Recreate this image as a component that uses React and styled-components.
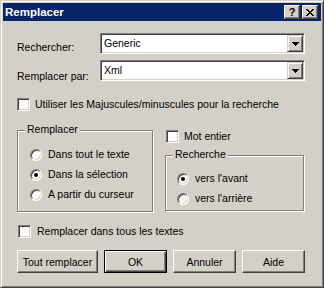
import React from 'react'
import styled, { createGlobalStyle } from 'styled-components'

const GlobalStyle = createGlobalStyle`
  html, body {
    margin: 0;
    padding: 0;
    background: #d4d0c8;
  }
  body {
    font-family: "Liberation Sans", Arial, sans-serif;
    font-size: 10.5px;
    color: #000;
  }
`

const Window = styled.div`
  width: 324px;
  height: 288px;
  box-sizing: border-box;
  background: #d4d0c8;
  border: 1px solid;
  border-color: #d4d0c8 #404040 #404040 #d4d0c8;
  box-shadow: inset 1px 1px #fff, inset -1px -1px #808080;
  padding: 2px;
  display: flex;
  flex-direction: column;
`

const TitleBar = styled.div`
  height: 18px;
  flex-shrink: 0;
  background: #0a246a;
  display: flex;
  align-items: center;
  padding: 0 3px 0 2px;
`

const Title = styled.span`
  flex: 1;
  color: #fff;
  font-weight: bold;
  font-size: 11.5px;
  line-height: 18px;
`

const CaptionButton = styled.div`
  width: 16px;
  height: 14px;
  box-sizing: border-box;
  background: #d4d0c8;
  border: 1px solid;
  border-color: #fff #404040 #404040 #fff;
  box-shadow: inset -1px -1px #808080;
  display: flex;
  align-items: center;
  justify-content: center;
  font-weight: bold;
  font-size: 11px;
  line-height: 12px;
  & + & {
    margin-left: 2px;
  }
`

const Body = styled.div`
  flex: 1;
  display: flex;
  flex-direction: column;
  padding: 12px 16px 0 14px;
`

const FieldRow = styled.div`
  display: flex;
  height: 21px;
  margin-top: ${p => p.$top || 0}px;
`

const FieldLabel = styled.div`
  width: 83px;
  padding-top: ${p => p.$offset}px;
  line-height: 13px;
  white-space: nowrap;
`

const Combo = styled.div`
  width: 205px;
  height: 21px;
  box-sizing: border-box;
  background: #fff;
  border: 1px solid;
  border-color: #808080 #fff #fff #808080;
  box-shadow: inset 1px 1px #404040, inset -1px -1px #d4d0c8;
  padding: 1px;
  display: flex;
`

const ComboText = styled.div`
  flex: 1;
  padding-left: 2px;
  line-height: 17px;
  white-space: nowrap;
`

const DropButton = styled.div`
  width: 16px;
  height: 17px;
  box-sizing: border-box;
  background: #d4d0c8;
  border: 1px solid;
  border-color: #d4d0c8 #404040 #404040 #d4d0c8;
  box-shadow: inset 1px 1px #fff, inset -1px -1px #808080;
  display: flex;
  align-items: center;
  justify-content: center;
`

const CheckRow = styled.div`
  display: flex;
  align-items: center;
  height: 13px;
  margin-top: ${p => p.$top || 0}px;
  margin-left: ${p => p.$indent || 0}px;
`

const CheckBox = styled.div`
  width: 13px;
  height: 13px;
  box-sizing: border-box;
  flex-shrink: 0;
  background: #fff;
  border: 1px solid;
  border-color: #808080 #fff #fff #808080;
  box-shadow: inset 1px 1px #404040, inset -1px -1px #d4d0c8;
`

const OptionLabel = styled.span`
  margin-left: ${p => p.$gap || 5}px;
  line-height: 13px;
  white-space: nowrap;
`

const Options = styled.div`
  display: flex;
  margin-top: 19px;
  height: 82px;
`

const RightColumn = styled.div`
  display: flex;
  flex-direction: column;
  margin-left: 12px;
  flex: 1;
`

const Group = styled.div`
  position: relative;
  box-sizing: border-box;
  width: ${p => p.$w}px;
  height: ${p => p.$h}px;
  margin-top: ${p => p.$top || 0}px;
  border: 1px solid #808080;
  box-shadow: inset 1px 1px #fff, 1px 1px #fff;
  padding: ${p => p.$padTop}px 0 0 ${p => p.$padLeft}px;
  display: flex;
  flex-direction: column;
  gap: 7px;
`

const Legend = styled.span`
  position: absolute;
  top: -8px;
  left: 7px;
  padding: 0 2px;
  background: #d4d0c8;
  line-height: 13px;
`

const RadioRow = styled.div`
  display: flex;
  align-items: center;
  height: 13px;
`

const Radio = styled.div`
  position: relative;
  width: 12px;
  height: 12px;
  box-sizing: border-box;
  flex-shrink: 0;
  border-radius: 50%;
  background: #fff;
  border: 1px solid;
  border-color: #808080 #fff #fff #808080;
  box-shadow: inset 1px 1px #404040, inset -1px -1px #d4d0c8;
  &::after {
    content: '';
    display: ${p => (p.$checked ? 'block' : 'none')};
    position: absolute;
    left: 3px;
    top: 3px;
    width: 4px;
    height: 4px;
    border-radius: 50%;
    background: #000;
  }
`

const ButtonRow = styled.div`
  display: flex;
  gap: 6px;
  margin-top: 12px;
`

const Button = styled.button`
  width: ${p => p.$w}px;
  height: 23px;
  box-sizing: border-box;
  padding: 0;
  font: inherit;
  color: #000;
  background: #d4d0c8;
  border: 1px solid;
  border-color: ${p => (p.$default ? '#000' : '#fff #404040 #404040 #fff')};
  box-shadow: ${p =>
    p.$default
      ? 'inset 1px 1px #fff, inset -1px -1px #404040, inset -2px -2px #808080'
      : 'inset -1px -1px #808080'};
  white-space: nowrap;
`

function CloseGlyph() {
  return (
    <svg width="8" height="7" viewBox="0 0 8 7" shapeRendering="crispEdges">
      <path
        fill="#000"
        d="M0 0h2v1h-2zM6 0h2v1h-2zM1 1h2v1h-2zM5 1h2v1h-2zM2 2h4v1h-4zM3 3h2v1h-2zM2 4h4v1h-4zM1 5h2v1h-2zM5 5h2v1h-2zM0 6h2v1h-2zM6 6h2v1h-2z"
      />
    </svg>
  )
}

function DownArrow() {
  return (
    <svg width="7" height="4" viewBox="0 0 7 4" shapeRendering="crispEdges">
      <path fill="#000" d="M0 0h7v1h-1v1h-1v1h-1v1h-1v-1h-1v-1h-1v-1h-1z" />
    </svg>
  )
}

function ComboBox({ value }) {
  return (
    <Combo>
      <ComboText>{value}</ComboText>
      <DropButton>
        <DownArrow />
      </DropButton>
    </Combo>
  )
}

function Check({ label, top, indent, gap }) {
  return (
    <CheckRow $top={top} $indent={indent}>
      <CheckBox />
      <OptionLabel $gap={gap}>{label}</OptionLabel>
    </CheckRow>
  )
}

function RadioOption({ label, checked }) {
  return (
    <RadioRow>
      <Radio $checked={checked} />
      <OptionLabel $gap={6}>{label}</OptionLabel>
    </RadioRow>
  )
}

export default function App() {
  return (
    <>
      <GlobalStyle />
      <Window>
        <TitleBar>
          <Title>Remplacer</Title>
          <CaptionButton>?</CaptionButton>
          <CaptionButton>
            <CloseGlyph />
          </CaptionButton>
        </TitleBar>
        <Body>
          <FieldRow>
            <FieldLabel $offset={8}>Rechercher:</FieldLabel>
            <ComboBox value="Generic" />
          </FieldRow>
          <FieldRow $top={6}>
            <FieldLabel $offset={10}>Remplacer par:</FieldLabel>
            <ComboBox value="Xml" />
          </FieldRow>
          <Check top={17} label="Utiliser les Majuscules/minuscules pour la recherche" />
          <Options>
            <Group $w={136} $h={82} $padTop={17} $padLeft={12}>
              <Legend>Remplacer</Legend>
              <RadioOption label="Dans tout le texte" />
              <RadioOption label="Dans la sélection" checked />
              <RadioOption label="A partir du curseur" />
            </Group>
            <RightColumn>
              <Check indent={1} label="Mot entier" />
              <Group $w={139} $h={56} $top={12} $padTop={16} $padLeft={11}>
                <Legend>Recherche</Legend>
                <RadioOption label="vers l'avant" checked />
                <RadioOption label="vers l'arrière" />
              </Group>
            </RightColumn>
          </Options>
          <Check top={13} indent={1} gap={6} label="Remplacer dans tous les textes" />
          <ButtonRow>
            <Button $w={81}>Tout remplacer</Button>
            <Button $w={63} $default>OK</Button>
            <Button $w={63}>Annuler</Button>
            <Button $w={63}>Aide</Button>
          </ButtonRow>
        </Body>
      </Window>
    </>
  )
}
